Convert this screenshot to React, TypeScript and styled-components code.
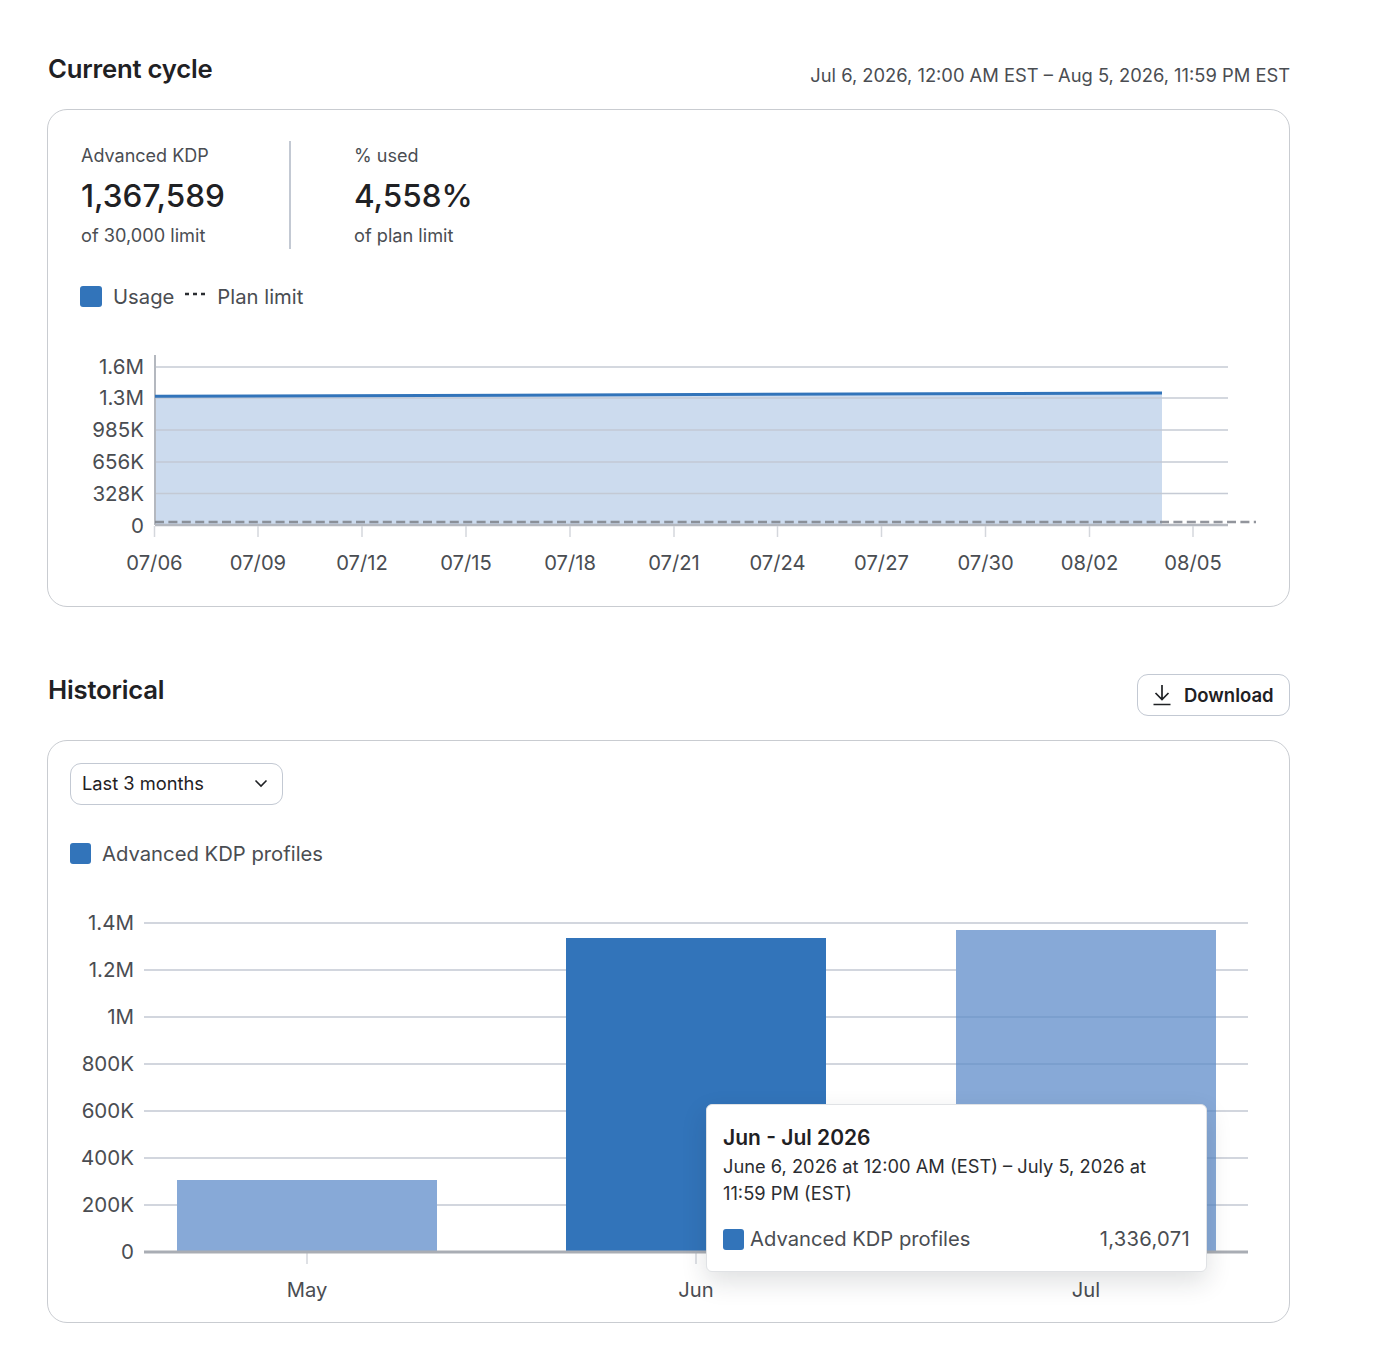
import styled, { createGlobalStyle } from 'styled-components';

const BLUE = '#3274ba';
const GRID = '#c3c9d3';
const MUTED = '#4a4d52';
const DARK = '#1f2124';

const GlobalStyle = createGlobalStyle`
  html, body { margin: 0; padding: 0; background: #fff; }
  body { font-family: Inter, 'Liberation Sans', sans-serif; color: ${DARK}; -webkit-font-smoothing: antialiased; }
`;

const Page = styled.div`
  width: 1243px;
  padding: 53px 0 38px 47px;
`;

const CycleHeader = styled.div`
  display: flex;
  justify-content: space-between;
  align-items: flex-end;
  height: 31px;
  padding-left: 1px;
  margin-bottom: 25px;
`;

const Title = styled.h2`
  margin: 0;
  font-size: 25.7px;
  line-height: 31px;
  font-weight: 600;
  letter-spacing: -0.2px;
  color: ${DARK};
`;

const Range = styled.div`
  position: relative;
  top: 2px;
  font-size: 18.34px;
  line-height: 22px;
  color: ${MUTED};
`;

const Card = styled.section`
  position: relative;
  box-sizing: border-box;
  border: 1px solid #c9ccd1;
  border-radius: 20px;
  background: #fff;
`;

const CycleCard = styled(Card)`
  height: 498px;
  padding: 31px 0 0 0;
`;

const Stats = styled.div`
  display: flex;
  height: 108px;
  padding-left: 33px;
`;

const Stat = styled.div<{ $divided?: boolean }>`
  width: ${(p) => (p.$divided ? '210px' : 'auto')};
  padding-left: ${(p) => (p.$divided ? '0' : '63px')};
  border-right: ${(p) => (p.$divided ? `2px solid ${GRID}` : 'none')};
  box-sizing: border-box;
`;

const StatLabel = styled.div`
  font-size: 18px;
  line-height: 22px;
  margin-top: 4px;
  color: ${MUTED};
`;

const StatValue = styled.div`
  font-size: 31.5px;
  line-height: 40px;
  margin-top: 9px;
  font-weight: 500;
  color: ${DARK};
`;

const StatNote = styled.div`
  font-size: 18.2px;
  line-height: 22px;
  margin-top: 8px;
  color: ${MUTED};
`;

const Legend = styled.div<{ $left: number; $top: number }>`
  display: flex;
  align-items: center;
  height: 24px;
  margin: ${(p) => p.$top}px 0 0 ${(p) => p.$left}px;
  font-size: 20.25px;
  color: ${MUTED};
`;

const Swatch = styled.span`
  flex: none;
  width: 22px;
  height: 21px;
  border-radius: 3px;
  background: ${BLUE};
  margin-right: 11px;
`;

const DashMark = styled.svg`
  flex: none;
  margin: 0 12px 5px 11px;
`;

const ChartSvg = styled.svg`
  display: block;
  overflow: visible;
  font-family: Inter, 'Liberation Sans', sans-serif;
  font-size: 20.2px;
  fill: ${MUTED};
`;

const AxisLabel = styled.text`
  font-size: 20.5px;
`;

const CycleChartWrap = styled.div`
  margin-top: 40px;
`;

const HistoricalHeader = styled.div`
  display: flex;
  justify-content: space-between;
  align-items: flex-start;
  height: 42px;
  margin-top: 67px;
  margin-bottom: 24px;
  padding-left: 1px;
`;

const Download = styled.button`
  display: flex;
  align-items: center;
  gap: 12px;
  box-sizing: border-box;
  width: 153px;
  height: 42px;
  padding: 0 0 0 14px;
  border: 1px solid #c3c9d3;
  border-radius: 11px;
  background: #fff;
  font-family: inherit;
  font-size: 18.5px;
  font-weight: 600;
  color: ${DARK};
`;

const HistoryCard = styled(Card)`
  height: 583px;
  padding: 22px 0 0 22px;
`;

const Select = styled.div`
  display: flex;
  align-items: center;
  justify-content: space-between;
  box-sizing: border-box;
  width: 213px;
  height: 42px;
  padding: 0 14px 2px 11px;
  border: 1px solid #c3c9d3;
  border-radius: 11px;
  font-size: 18.3px;
  color: ${DARK};
`;

const HistoryLegend = styled(Legend)`
  ${Swatch} {
    width: 21px;
  }
`;

const HistoryChartWrap = styled.div`
  margin: 35px 0 0 -22px;
`;

const Tooltip = styled.div`
  position: absolute;
  left: 658px;
  top: 363px;
  box-sizing: border-box;
  width: 501px;
  height: 168px;
  padding: 20px 16px 0 16px;
  background: #fff;
  border: 1px solid #e0e2e5;
  border-radius: 6px;
  box-shadow: 0 10px 26px rgba(30, 35, 45, 0.14);
`;

const TipTitle = styled.div`
  font-size: 21px;
  line-height: 26px;
  font-weight: 600;
  color: ${DARK};
`;

const TipText = styled.div`
  font-size: 18.3px;
  line-height: 27px;
  margin-top: 2px;
  color: #2b2d31;
`;

const TipRow = styled.div`
  display: flex;
  align-items: center;
  justify-content: space-between;
  margin-top: 19px;
  font-size: 20.2px;
  line-height: 26px;
  color: ${MUTED};
`;

const TipName = styled.div`
  display: flex;
  align-items: center;
`;

const TipSwatch = styled(Swatch)`
  width: 21px;
  height: 21px;
  margin-right: 6px;
`;

const TipValue = styled.span`
  letter-spacing: 0.3px;
`;

const cycleY = [
  { label: '1.6M', y: 367 },
  { label: '1.3M', y: 398 },
  { label: '985K', y: 430 },
  { label: '656K', y: 462 },
  { label: '328K', y: 493.5 },
];

const cycleX = [
  { label: '07/06', x: 154.5 },
  { label: '07/09', x: 258 },
  { label: '07/12', x: 362 },
  { label: '07/15', x: 466 },
  { label: '07/18', x: 570 },
  { label: '07/21', x: 674 },
  { label: '07/24', x: 777.5 },
  { label: '07/27', x: 881.5 },
  { label: '07/30', x: 985.5 },
  { label: '08/02', x: 1089.5 },
  { label: '08/05', x: 1193 },
];

const historyY = [
  { label: '1.4M', y: 923 },
  { label: '1.2M', y: 970 },
  { label: '1M', y: 1017 },
  { label: '800K', y: 1064 },
  { label: '600K', y: 1111 },
  { label: '400K', y: 1158 },
  { label: '200K', y: 1205 },
];

const bars = [
  { label: 'May', x: 177, top: 1180, center: 307, color: '#87a9d7' },
  { label: 'Jun', x: 566, top: 938, center: 696, color: BLUE },
  { label: 'Jul', x: 956, top: 930, center: 1086, color: '#87a9d7' },
];

function CycleChart() {
  return (
    <ChartSvg width={1241} height={250} viewBox="48 348 1241 250">
      <path d="M155 397 L1162 393.5 V525 H155 Z" fill="#ccdbee" />
      {cycleY.map((t) => (
        <g key={t.label}>
          <line x1={155} x2={1228} y1={t.y} y2={t.y} stroke={GRID} strokeWidth={1.3} opacity={0.95} />
          <AxisLabel x={144} y={t.y + 7} textAnchor="end">{t.label}</AxisLabel>
        </g>
      ))}
      <AxisLabel x={144} y={532.5} textAnchor="end">0</AxisLabel>
      <line x1={155} x2={1228} y1={525} y2={525} stroke="#b4b8bf" strokeWidth={2.5} />
      <line x1={155} x2={155} y1={355} y2={525} stroke="#b4b8bf" strokeWidth={2} />
      {cycleX.map((t) => (
        <g key={t.label}>
          <line x1={t.x} x2={t.x} y1={526} y2={537} stroke="#d4d7dc" strokeWidth={1.5} />
          <text x={t.x} y={570} textAnchor="middle">{t.label}</text>
        </g>
      ))}
      <line x1={155} x2={1162} y1={396.3} y2={393} stroke={BLUE} strokeWidth={3} />
      <line x1={155} x2={1256} y1={522} y2={522} stroke="#7f838b" strokeWidth={2.6} strokeDasharray="9 4.4" opacity={0.85} />
    </ChartSvg>
  );
}

function HistoryChart() {
  return (
    <ChartSvg width={1241} height={420} viewBox="48 900 1241 420">
      {historyY.map((t) => (
        <g key={t.label}>
          <line x1={144} x2={1248} y1={t.y} y2={t.y} stroke={GRID} strokeWidth={1.3} />
          <AxisLabel x={134} y={t.y + 7} textAnchor="end">{t.label}</AxisLabel>
        </g>
      ))}
      <AxisLabel x={134} y={1259} textAnchor="end">0</AxisLabel>
      {bars.map((b) => (
        <g key={b.label}>
          <rect x={b.x} y={b.top} width={260} height={1252 - b.top} fill={b.color} />
          <line x1={b.center} x2={b.center} y1={1252} y2={1264} stroke="#d4d7dc" strokeWidth={1.5} />
          <text x={b.center} y={1297} textAnchor="middle">{b.label}</text>
        </g>
      ))}
      {historyY.slice(2).map((t) => (
        <line key={t.label} x1={956} x2={1216} y1={t.y} y2={t.y} stroke="#5f86b8" strokeWidth={1.2} opacity={0.55} />
      ))}
      <line x1={144} x2={1248} y1={1252} y2={1252} stroke="#a9adb4" strokeWidth={3} />
    </ChartSvg>
  );
}

export default function App() {
  return (
    <Page>
      <GlobalStyle />
      <CycleHeader>
        <Title>Current cycle</Title>
        <Range>Jul 6, 2026, 12:00 AM EST – Aug 5, 2026, 11:59 PM EST</Range>
      </CycleHeader>
      <CycleCard>
        <Stats>
          <Stat $divided>
            <StatLabel>Advanced KDP</StatLabel>
            <StatValue>1,367,589</StatValue>
            <StatNote>of 30,000 limit</StatNote>
          </Stat>
          <Stat>
            <StatLabel>% used</StatLabel>
            <StatValue>4,558%</StatValue>
            <StatNote>of plan limit</StatNote>
          </Stat>
        </Stats>
        <Legend $left={32} $top={35}>
          <Swatch />
          Usage
          <DashMark width={20} height={4} viewBox="0 0 20 4">
            <path d="M0 2h4M8 2h4M16 2h4" stroke="#2b2d31" strokeWidth={2.4} />
          </DashMark>
          Plan limit
        </Legend>
        <CycleChartWrap>
          <CycleChart />
        </CycleChartWrap>
      </CycleCard>

      <HistoricalHeader>
        <Title>Historical</Title>
        <Download>
          <svg width={20} height={22} viewBox="0 0 20 22" fill="none" stroke="#1f2124" strokeWidth={1.7}>
            <path d="M10 1v14M3.500 9l6.500 6.500L16.500 9M1.500 20.500h17" />
          </svg>
          Download
        </Download>
      </HistoricalHeader>
      <HistoryCard>
        <Select>
          Last 3 months
          <svg width={14} height={9} viewBox="0 0 14 9" fill="none" stroke="#1f2124" strokeWidth={1.6}>
            <path d="M1.500 1.500 7 7l5.500-5.500" />
          </svg>
        </Select>
        <HistoryLegend $left={0} $top={36}>
          <Swatch />
          Advanced KDP profiles
        </HistoryLegend>
        <HistoryChartWrap>
          <HistoryChart />
        </HistoryChartWrap>
        <Tooltip>
          <TipTitle>Jun - Jul 2026</TipTitle>
          <TipText>
            June 6, 2026 at 12:00 AM (EST) – July 5, 2026 at
            <br />
            11:59 PM (EST)
          </TipText>
          <TipRow>
            <TipName>
              <TipSwatch />
              Advanced KDP profiles
            </TipName>
            <TipValue>1,336,071</TipValue>
          </TipRow>
        </Tooltip>
      </HistoryCard>
    </Page>
  );
}
